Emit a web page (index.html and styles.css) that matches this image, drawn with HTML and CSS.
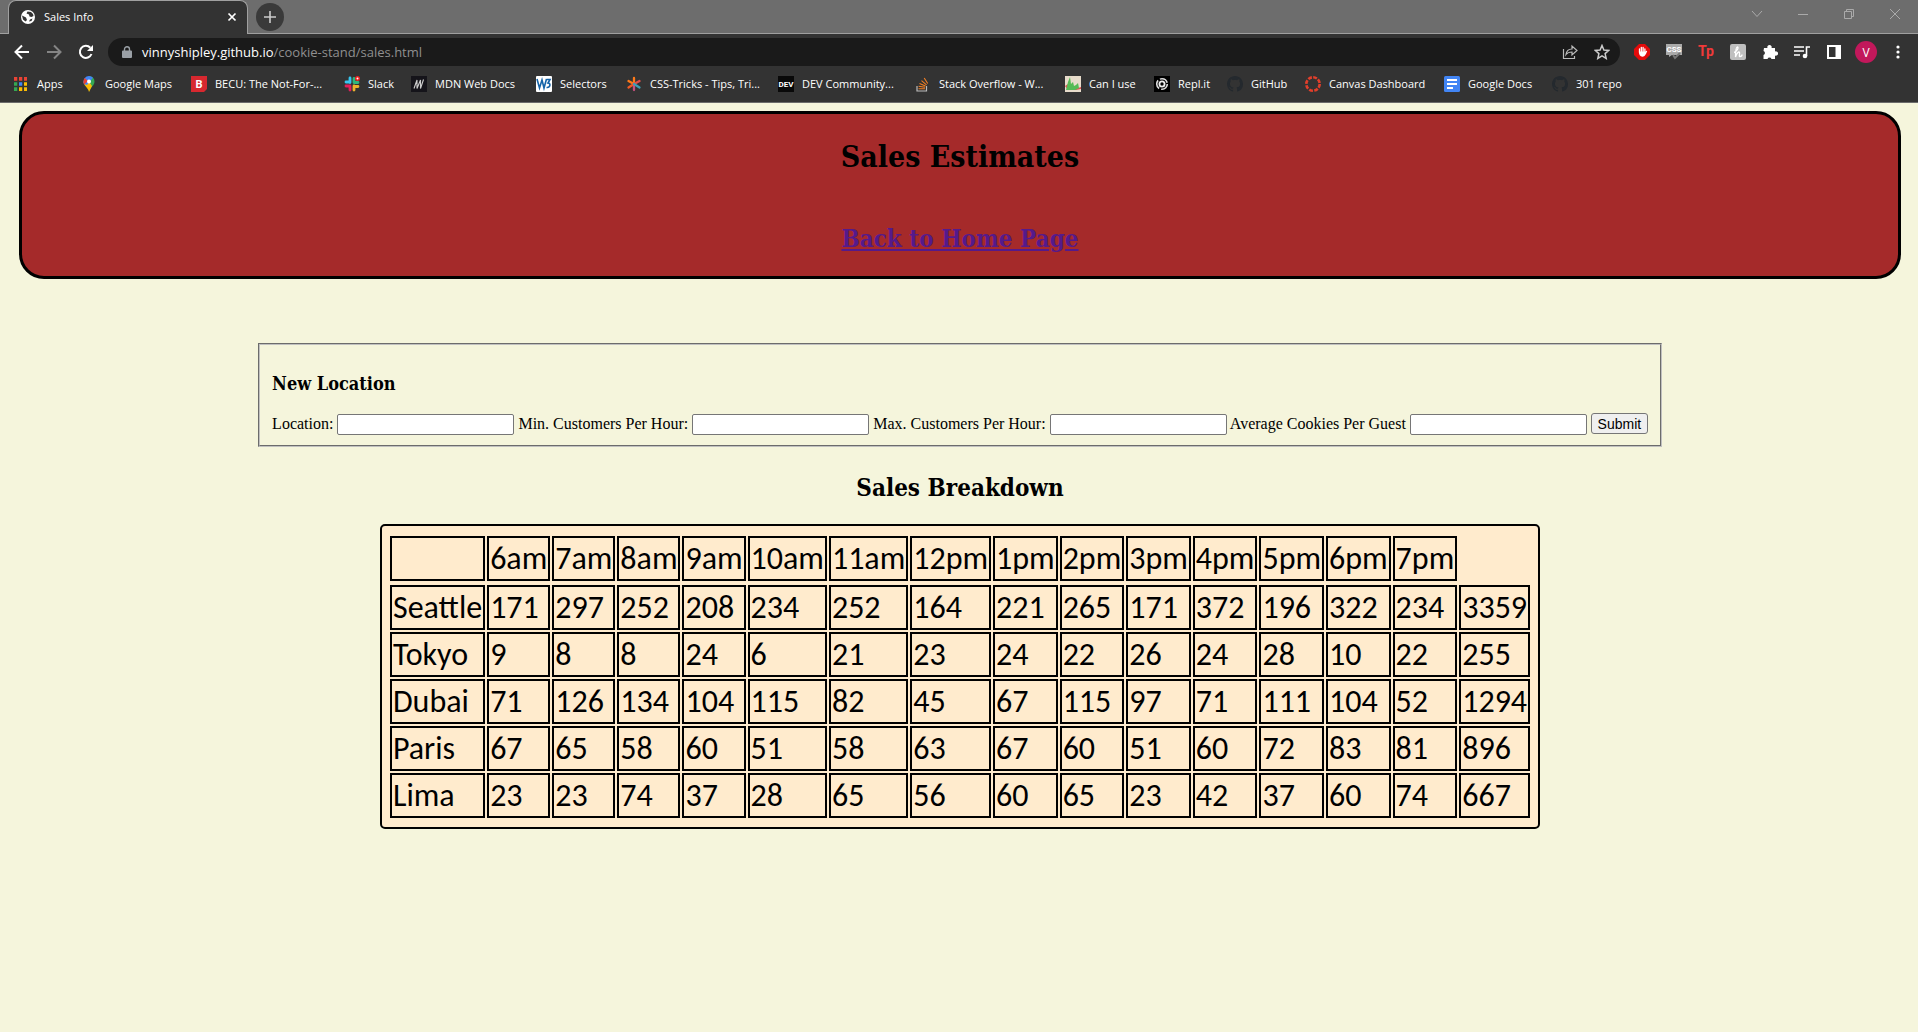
FILE: index.html
```html
<!DOCTYPE html>
<html lang="en">
<head>
<meta charset="utf-8">
<title>Sales Info</title>
<link rel="stylesheet" href="styles.css">
</head>
<body>
<div class="browser">
  <div class="tabstrip">
    <div class="tab">
      <svg class="i16" viewBox="0 0 16 16"><circle cx="8" cy="8" r="7" fill="#fff"/><path d="M2 6.500 6 8.500l1 2.500-1.500 1.500-2.500-2zM7.500 2.500l-1 2 2.500 1 .5 2 2 .5 2-1-.5-2-2-2zM9 12.500l1-2 2.500-1-1 2.500z" fill="#333"/></svg>
      <span class="tab-title">Sales Info</span>
      <button class="tab-close" aria-label="Close tab"><svg width="10" height="10" viewBox="0 0 10 10"><path d="M1.500 1.500l7 7M8.500 1.500l-7 7" stroke="#fff" stroke-width="1.700"/></svg></button>
    </div>
    <button class="newtab" aria-label="New tab"><svg width="12" height="12" viewBox="0 0 12 12"><path d="M6 0v12M0 6h12" stroke="#ccc" stroke-width="1.600"/></svg></button>
    <div class="wincontrols">
      <button aria-label="Search tabs"><svg width="12" height="12" viewBox="0 0 12 12"><path d="M1 3l5 5.500L11 3" fill="none" stroke="#aaa"/></svg></button>
      <button aria-label="Minimize"><svg width="12" height="12" viewBox="0 0 12 12"><path d="M1 6.500h10" stroke="#aaa"/></svg></button>
      <button aria-label="Restore"><svg width="12" height="12" viewBox="0 0 12 12"><path d="M1.500 3.500h7v7h-7zM3.500 3.500v-2h7v7h-2" fill="none" stroke="#aaa"/></svg></button>
      <button aria-label="Close"><svg width="12" height="12" viewBox="0 0 12 12"><path d="M1 1l10 10M11 1L1 11" stroke="#aaa"/></svg></button>
    </div>
  </div>

  <div class="toolbar">
    <button class="tool" aria-label="Back"><svg class="i16" viewBox="0 0 16 16"><path d="M15 8H2M8 1.500L1.500 8 8 14.500" fill="none" stroke="#fff" stroke-width="2"/></svg></button>
    <button class="tool" aria-label="Forward"><svg class="i16" viewBox="0 0 16 16"><path d="M1 8h13M8 1.500L14.500 8 8 14.500" fill="none" stroke="#858585" stroke-width="2"/></svg></button>
    <button class="tool" aria-label="Reload"><svg class="i16" viewBox="0 0 16 16"><path d="M13.500 10A6 6 0 1 1 12.300 3.800" fill="none" stroke="#fff" stroke-width="2"/><path d="M15 1v6H9z" fill="#fff"/></svg></button>
    <div class="address">
      <svg class="lock" width="10" height="12" viewBox="0 0 10 12"><path d="M1 4.500h8a1 1 0 0 1 1 1V11a1 1 0 0 1-1 1H1a1 1 0 0 1-1-1V5.500a1 1 0 0 1 1-1z" fill="#9aa0a6"/><path d="M2.500 5V3.200a2.500 2.500 0 0 1 5 0V5" fill="none" stroke="#9aa0a6" stroke-width="1.400"/></svg>
      <span class="url">vinnyshipley.github.io<span class="path">/cookie-stand/sales.html</span></span>
      <button class="tool" aria-label="Share"><svg class="i16" viewBox="0 0 16 16"><path d="M1.500 5v9.500h11V12M4 10.500c.5-4 3-5.500 6-5.500V2l5 4.500-5 4.500V8c-2.500 0-4.500.5-6 2.500z" fill="none" stroke="#bbb" stroke-width="1.200"/></svg></button>
      <button class="tool" aria-label="Bookmark"><svg class="i16" viewBox="0 0 16 16"><path d="M8 1.500l1.900 4.500 4.900.4-3.700 3.200 1.100 4.800L8 11.900l-4.200 2.500 1.100-4.800L1.200 6.400 6.100 6z" fill="none" stroke="#ccc" stroke-width="1.500"/></svg></button>
    </div>
    <button class="tool" aria-label="Ad blocker"><svg class="i16" viewBox="0 0 16 16"><path d="M5 0h6l5 5v6l-5 5H5l-5-5V5z" fill="#e40b0b"/><path d="M5.500 8.500V5M7.300 8V3.500M9.100 8V3.500M10.900 8.500V5" stroke="#fff" stroke-width="1.300" stroke-linecap="round"/><path d="M4.900 7.500h6.600l1-.8c.6 0 .8.500.5 1-1 2-2 5-4.500 5-2.600 0-3.600-2-3.600-5.200z" fill="#fff"/></svg></button>
    <button class="tool" aria-label="CSS viewer"><svg class="i16" viewBox="0 0 16 16"><path d="M0 0h16v11H6l-3 2v-2H0z" fill="#aaa"/><text x="8" y="8" class="glyph css">CSS</text><path d="M7 11l2 3 5-5" stroke="#777" stroke-width="2" fill="none"/></svg></button>
    <button class="tool" aria-label="Tp"><svg class="i16" viewBox="0 0 16 16"><text x="8" y="12" class="glyph tp">Tp</text></svg></button>
    <button class="tool" aria-label="Honey"><svg class="i16" viewBox="0 0 16 16"><rect width="16" height="16" rx="2" fill="#bfbfbf"/><path d="M4 8.500c3-.5 5-5.500 3.500-5.500S5.500 8 5.500 13c1-4 3.500-6 4-4.500S8.500 13 10 12.500c1 0 2-1 2-2" stroke="#fff" stroke-width="1.300" fill="none"/></svg></button>
    <button class="tool" aria-label="Extensions"><svg class="i16" viewBox="0 0 16 16"><path d="M2 4h3.500a2.200 2.200 0 1 1 4 0H13v3.500a2.200 2.200 0 1 1 0 4V15H9.500a2.100 2.100 0 0 0-4 0H1.500v-4a2.100 2.100 0 0 0 0-4z" fill="#fff"/></svg></button>
    <button class="tool" aria-label="Media"><svg class="i16" viewBox="0 0 16 16"><path d="M0 3h10M0 7h10M0 11h6M12.500 12V3H16" stroke="#fff" stroke-width="1.600" fill="none"/><circle cx="11" cy="12" r="2.300" fill="#fff"/></svg></button>
    <button class="tool" aria-label="Side panel"><svg class="i16" viewBox="0 0 16 16"><path d="M1 1h14v14H1z" fill="#fff"/><path d="M3 3h6.500v10H3z" fill="#333"/></svg></button>
    <button class="avatar" aria-label="Profile">V</button>
    <button class="tool" aria-label="Menu"><svg class="i16" viewBox="0 0 16 16"><g fill="#fff"><circle cx="8" cy="3" r="1.600"/><circle cx="8" cy="8" r="1.600"/><circle cx="8" cy="13" r="1.600"/></g></svg></button>
  </div>

  <nav class="bookmarks">
    <a href="#"><svg class="i16" viewBox="0 0 16 16"><path d="M1 1h4v4H1zM6 1h4v4H6zM11 1h3v4h-3z" fill="#ea4335"/><path d="M1 6h4v4H1z" fill="#34a853"/><path d="M6 6h4v4H6z" fill="#4285f4"/><path d="M11 6h3v4h-3zM6 11h4v4H6zM11 11h3v4h-3z" fill="#fbbc04"/><path d="M1 11h4v4H1z" fill="#34a853"/><path d="M5 0v16M10 0v16M0 5.500h16M0 10.500h16" stroke="#333" stroke-width="1.500"/></svg>Apps</a>
    <a href="#"><svg class="i16" viewBox="0 0 16 16"><path d="M8 0a5.500 5.500 0 0 1 5.500 5.500C13.500 10 9 11 8 16z" fill="#34a853"/><path d="M2.500 5.500C2.500 10 7 11 8 16l3-6-4-6z" fill="#fbbc04"/><path d="M3.800 2A5.500 5.500 0 0 1 12 1.700L6 9 3 8C2 6 2.500 3.500 3.800 2z" fill="#4285f4"/><path d="M3.800 2L7 5 3.200 8.500C2 6 2.500 3.500 3.800 2z" fill="#ea4335"/><circle cx="8" cy="5.500" r="2" fill="#fff"/></svg>Google Maps</a>
    <a href="#"><svg class="i16" viewBox="0 0 16 16"><path d="M0 0h16v13l-3 3H0z" fill="#d7282f"/><text x="8" y="12" class="glyph becu">B</text></svg>BECU: The Not-For-...</a>
    <a href="#"><svg class="i16" viewBox="0 0 16 16"><g stroke-width="2.800" stroke-linecap="round"><path d="M6 2v4.500M2 6h4" stroke="#36c5f0"/><path d="M10 2.500v4M10 6.500h4" stroke="#2eb67d"/><path d="M10 10v4M10 10.500h4" stroke="#ecb22e"/><path d="M6 10v4M2 10h3" stroke="#e01e5a"/></g><circle cx="13.500" cy="2.500" r="2.500" fill="#e22"/><circle cx="13.500" cy="2.500" r="1" fill="#fff"/></svg>Slack</a>
    <a href="#"><svg class="i16" viewBox="0 0 16 16"><path d="M0 0h16v16H0z" fill="#15141a"/><path d="M3 12.500L6 4v8.500L9.500 4v8.500l3-9" stroke="#ccc" stroke-width="1.100" fill="none"/></svg>MDN Web Docs</a>
    <a href="#"><svg class="i16" viewBox="0 0 16 16"><rect width="16" height="16" rx="1" fill="#fff"/><path d="M1 3l2.500 9L6 4l2 8L10.500 3M10.500 3.500H14L12 7c3 0 2.500 5-1.500 4.500" stroke="#1463a8" stroke-width="1.600" fill="none"/></svg>Selectors</a>
    <a href="#"><svg class="i16" viewBox="0 0 16 16"><g stroke-width="2.300" stroke-linecap="round"><path d="M8 8V2M8 8L2.500 5" stroke="#ff7a18"/><path d="M8 8l-5.500 3.500" stroke="#f15a24"/><path d="M8 8l5.500-3" stroke="#e0504c"/><path d="M8 8v6" stroke="#c3517d"/><path d="M8 8l5.500 3.500" stroke="#3c9fb5"/></g></svg>CSS-Tricks - Tips, Tri...</a>
    <a href="#"><svg class="i16" viewBox="0 0 16 16"><path d="M0 0h16v16H0z" fill="#090909"/><text x="8" y="11" class="glyph dev">DEV</text></svg>DEV Community...</a>
    <a href="#"><svg class="i16" viewBox="0 0 16 16"><path d="M2 10v5h9.500v-5" stroke="#bcbbbb" stroke-width="1.200" fill="none"/><path d="M3.500 12.800H10M3.600 10.300l6.400 1M4.500 7.500l6 2.500M6.500 4.700l5 4.200M9.200 2l3.500 5.500" stroke="#f48024" stroke-width="1.100"/></svg>Stack Overflow - W...</a>
    <a href="#"><svg class="i16" viewBox="0 0 16 16"><path d="M0 0h16v16H0z" fill="#e8dccb"/><path d="M0 10l3-2 3 5 7-1 3-1v2l-5 1H3z" fill="#d55"/><path d="M1 14l2-8 2-5 1 7 2-2 1 4 2-1 2-2 1 5-4 2z" fill="#5b5"/></svg>Can I use</a>
    <a href="#"><svg class="i16" viewBox="0 0 16 16"><path d="M0 0h16v16H0z" fill="#000"/><circle cx="8" cy="8" r="5.300" fill="none" stroke="#ddd" stroke-width="1.600" stroke-dasharray="9 2.100"/><circle cx="8" cy="8" r="2.600" fill="none" stroke="#eee" stroke-width="1.800"/></svg>Repl.it</a>
    <a href="#"><svg class="i16" viewBox="0 0 16 16"><use href="#cat"/></svg>GitHub</a>
    <a href="#"><svg class="i16" viewBox="0 0 16 16"><circle cx="8" cy="8" r="6.700" fill="none" stroke="#e13f2b" stroke-width="2.600" stroke-dasharray="3.900 1.360"/></svg>Canvas Dashboard</a>
    <a href="#"><svg class="i16" viewBox="0 0 16 16"><rect width="16" height="16" rx="1.500" fill="#4285f4"/><path d="M3 4h10M3 8h10M3 12h6" stroke="#fff" stroke-width="1.800"/></svg>Google Docs</a>
    <a href="#"><svg class="i16" viewBox="0 0 16 16"><path id="cat" d="M8 0C3.580 0 0 3.580 0 8c0 3.540 2.290 6.530 5.470 7.590.4.070.55-.17.55-.38v-1.490c-2.010.37-2.530-.49-2.690-.94-.09-.23-.48-.94-.82-1.130-.28-.15-.68-.52-.01-.53.63-.01 1.080.58 1.230.82.720 1.210 1.870.87 2.330.66.070-.52.280-.87.510-1.070-1.780-.2-3.640-.89-3.640-3.950 0-.87.310-1.590.820-2.150-.08-.2-.36-1.020.08-2.120 0 0 .67-.21 2.200.82a7.600 7.600 0 0 1 4 0c1.530-1.040 2.200-.82 2.200-.82.440 1.100.160 1.920.080 2.120.510.560.820 1.270.820 2.150 0 3.070-1.870 3.750-3.650 3.950.290.250.540.730.540 1.480v2.200c0 .21.150.46.550.38A8 8 0 0 0 16 8c0-4.420-3.580-8-8-8z" fill="#24292e"/></svg>301 repo</a>
  </nav>
</div>

<main class="page">
  <header class="banner">
    <h1>Sales Estimates</h1>
    <h2><a href="index.html">Back to Home Page</a></h2>
  </header>

  <form class="new-location">
    <fieldset>
      <h3>New Location</h3>
      <label for="location">Location:</label>
      <input type="text" id="location">
      <label for="min">Min. Customers Per Hour:</label>
      <input type="text" id="min">
      <label for="max">Max. Customers Per Hour:</label>
      <input type="text" id="max">
      <label for="avg">Average Cookies Per Guest</label>
      <input type="text" id="avg">
      <button type="submit">Submit</button>
    </fieldset>
  </form>

  <h2 class="section-title">Sales Breakdown</h2>
  <table class="sales">
    <thead>
      <tr><th></th><th>6am</th><th>7am</th><th>8am</th><th>9am</th><th>10am</th><th>11am</th><th>12pm</th><th>1pm</th><th>2pm</th><th>3pm</th><th>4pm</th><th>5pm</th><th>6pm</th><th>7pm</th></tr>
    </thead>
    <tbody>
      <tr><th>Seattle</th><td>171</td><td>297</td><td>252</td><td>208</td><td>234</td><td>252</td><td>164</td><td>221</td><td>265</td><td>171</td><td>372</td><td>196</td><td>322</td><td>234</td><td>3359</td></tr>
      <tr><th>Tokyo</th><td>9</td><td>8</td><td>8</td><td>24</td><td>6</td><td>21</td><td>23</td><td>24</td><td>22</td><td>26</td><td>24</td><td>28</td><td>10</td><td>22</td><td>255</td></tr>
      <tr><th>Dubai</th><td>71</td><td>126</td><td>134</td><td>104</td><td>115</td><td>82</td><td>45</td><td>67</td><td>115</td><td>97</td><td>71</td><td>111</td><td>104</td><td>52</td><td>1294</td></tr>
      <tr><th>Paris</th><td>67</td><td>65</td><td>58</td><td>60</td><td>51</td><td>58</td><td>63</td><td>67</td><td>60</td><td>51</td><td>60</td><td>72</td><td>83</td><td>81</td><td>896</td></tr>
      <tr><th>Lima</th><td>23</td><td>23</td><td>74</td><td>37</td><td>28</td><td>65</td><td>56</td><td>60</td><td>65</td><td>23</td><td>42</td><td>37</td><td>60</td><td>74</td><td>667</td></tr>
    </tbody>
  </table>
</main>
</body>
</html>
```

FILE: styles.css
```css
body {
  margin: 0;
  background: beige;
  color: #000;
  font-family: "Liberation Serif", "Times New Roman", serif;
  font-size: 16px;
}

/* Browser window */
.browser {
  background: #333;
  border-bottom: 1px solid #6b6b6b;
  color: #fff;
  font-family: "Segoe UI", "Open Sans", sans-serif;
  font-size: 11px;
}
.browser button {
  display: flex;
  align-items: center;
  justify-content: center;
  padding: 0;
  border: 0;
  background: none;
}
.i16 {
  width: 16px;
  height: 16px;
  flex: none;
}
.tabstrip {
  display: flex;
  height: 34px;
  padding-left: 8px;
  box-sizing: border-box;
  background: #6d6d6d;
  box-shadow: inset 0 -1px #a0a0a0;
}
.tab {
  display: flex;
  align-items: center;
  gap: 8px;
  width: 240px;
  padding: 0 10px 2px 11px;
  box-sizing: border-box;
  background: #333;
  border: 1px solid #a0a0a0;
  border-bottom: 0;
  border-radius: 8px 8px 0 0;
}
.tab-title {
  flex: 1;
}
.browser .newtab {
  width: 28px;
  height: 28px;
  margin: 3px 0 0 8px;
  border-radius: 50%;
  background: #3a3a3a;
}
.wincontrols {
  display: flex;
  height: 28px;
  margin-left: auto;
}
.wincontrols button {
  width: 46px;
}
.toolbar {
  display: flex;
  align-items: center;
  height: 36px;
  padding: 0 4px 0 6px;
}
.tool {
  width: 32px;
  height: 28px;
  flex: none;
}
.address {
  display: flex;
  align-items: center;
  flex: 1;
  height: 28px;
  margin: 0 6px;
  padding: 0 2px 0 14px;
  border-radius: 14px;
  background: #1a1a1a;
}
.lock {
  margin-right: 10px;
}
.url {
  flex: 1;
  font-size: 13px;
}
.path {
  color: #8f8f8f;
}
.browser .avatar {
  width: 22px;
  height: 22px;
  margin: 0 5px;
  border-radius: 50%;
  background: #c2185b;
  color: #fff;
  font: 12px "Open Sans", sans-serif;
}
.bookmarks {
  display: grid;
  grid-template-columns: 68px 110px 153px 67px 125px 90px 152px 137px 150px 89px 73px 78px 139px 108px 80px;
  height: 32px;
  padding: 0 0 0 13px;
  white-space: nowrap;
}
.bookmarks a {
  display: flex;
  align-items: center;
  gap: 8px;
  height: 27px;
  color: #fff;
  text-decoration: none;
}
.glyph {
  fill: #fff;
  font-family: "Roboto", sans-serif;
  font-weight: bold;
  text-anchor: middle;
}
.css { font-size: 8px; }
.becu { font-size: 11px; }
.dev { font-size: 8px; }
.tp { font-size: 14px; fill: #f03a3a; }

/* Sales page */
.page {
  padding: 8px 0 16px 2px;
}
h1, h2, h3 {
  font-family: "Roboto Slab", "DejaVu Serif Condensed", "DejaVu Serif", serif;
}
.banner {
  margin: 0 17px;
  padding: 22px 0 18px;
  border: 3px solid #000;
  border-radius: 25px;
  background: brown;
  text-align: center;
}
.banner h1 {
  margin: 0 0 42px;
  font-size: 30px;
  line-height: 42px;
}
.banner h2 {
  margin: 0;
  font-size: 24px;
  line-height: 38px;
}
.banner a {
  color: #551a8b;
}
.new-location {
  width: fit-content;
  margin: 64px auto 0;
}
fieldset {
  margin: 0;
  padding: 6px 12px 10px;
  border: 2px groove #c0c0c0;
}
h3 {
  margin: 21px 0 17px;
  font-size: 18px;
  line-height: 24px;
}
fieldset input {
  width: 177px;
  height: 21px;
  padding: 1px 2px;
  box-sizing: border-box;
  border: 1px solid #767676;
  border-radius: 2px;
  background: #fff;
}
fieldset button {
  width: 57px;
  height: 21px;
  padding: 0;
  border: 1px solid #767676;
  border-radius: 3px;
  background: #efefef;
  font: 14px "Liberation Sans", Arial, sans-serif;
}
.section-title {
  margin: 22px 0 17px;
  font-size: 24px;
  line-height: 38px;
  text-align: center;
}
.sales {
  margin: 0 auto;
  padding: 8px 6px 7px;
  border: 2px solid #000;
  border-radius: 5px;
  border-spacing: 2px;
  background: blanchedalmond;
  font-family: Calibri, Carlito, Lato, sans-serif;
  font-size: 32px;
  line-height: 39px;
}
.sales thead::after {
  content: "";
  display: table-row;
}
.sales th, .sales td {
  height: 39px;
  padding: 1px;
  border: 2px solid #000;
  font-weight: normal;
  text-align: left;
}
```
